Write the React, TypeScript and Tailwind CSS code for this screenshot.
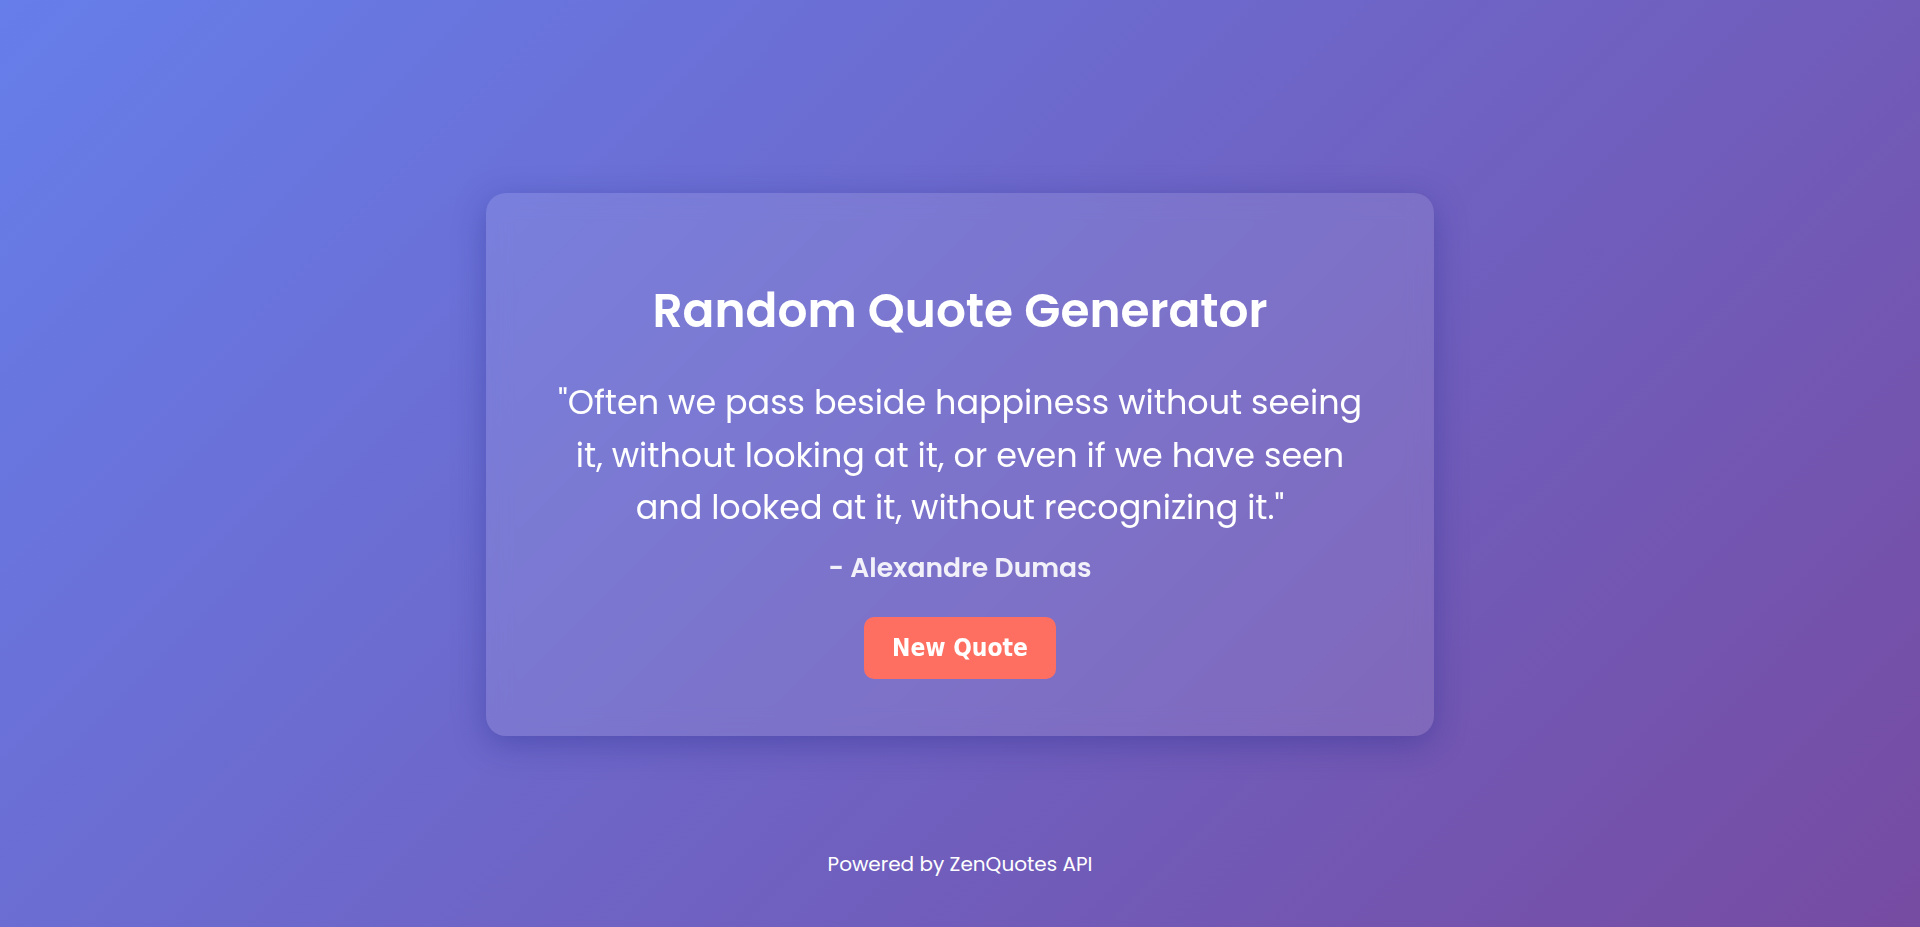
import { useState } from 'react';

const QUOTES = [
  {
    text: 'Often we pass beside happiness without seeing it, without looking at it, or even if we have seen and looked at it, without recognizing it.',
    author: 'Alexandre Dumas',
  },
];

export default function App() {
  const [index, setIndex] = useState(0);
  const quote = QUOTES[index];

  return (
    <div className="h-screen w-full flex flex-col bg-[linear-gradient(135deg,#667eea_0%,#764ba2_100%)] font-['Poppins','Inter',sans-serif] text-white overflow-hidden">
      {/* spacer so the card sits in the middle of the window */}
      <div className="h-[92px] shrink-0" />

      <main className="flex-1 flex items-center justify-center">
        <div className="w-[948px] rounded-[20px] bg-white/10 shadow-[0_8px_32px_rgba(31,38,135,0.37)] backdrop-blur-md px-12 pt-[90px] pb-[57px] flex flex-col items-center text-center">
          <h1 className="text-[47px] leading-[56px] font-semibold">
            Random Quote Generator
          </h1>

          <p className="mt-[38px] max-w-[830px] text-[33.4px] leading-[52.8px] font-normal">
            "{quote.text}"
          </p>

          <p className="mt-[13px] text-[26.6px] leading-[40px] font-semibold text-white/90">
            - {quote.author}
          </p>

          <button
            onClick={() => setIndex((index + 1) % QUOTES.length)}
            className="mt-[29px] w-[192px] h-[62px] rounded-[10px] bg-[#ff6f61] hover:bg-[#ff5a4b] font-['DejaVu_Sans_Condensed','DejaVu_Sans',sans-serif] font-bold text-[24.4px] text-white flex items-center justify-center transition"
          >
            New Quote
          </button>
        </div>
      </main>

      <footer className="h-[90px] shrink-0 flex justify-center pt-[12px]">
        <p className="text-[20px] leading-[30px]">Powered by ZenQuotes API</p>
      </footer>
    </div>
  );
}
